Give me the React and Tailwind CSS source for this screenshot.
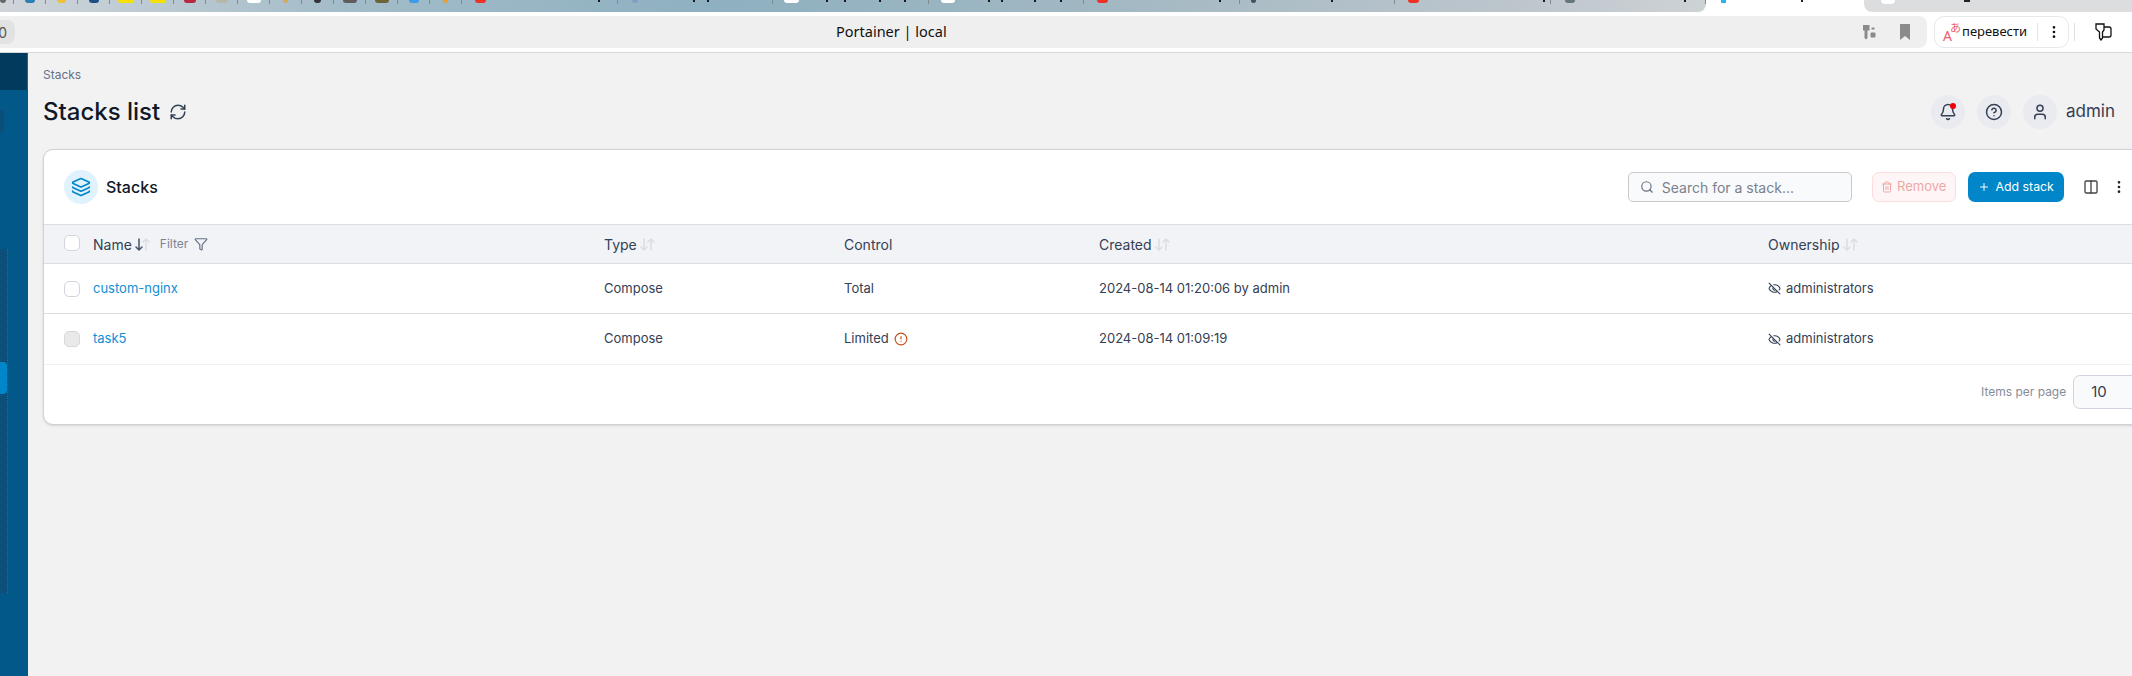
import { Bell, CircleAlert, CircleHelp, Columns2, EllipsisVertical, EyeOff, Funnel, Layers, Plus, RefreshCw, Search, Trash2, User } from "lucide-react";

const pinned = [
  { w: 14, color: "bg-[#666666]", iw: 6, align: "justify-start" },
  { w: 32, color: "bg-[#2a80b0]", iw: 10 },
  { w: 32, color: "bg-[#eec33c]", iw: 9 },
  { w: 32, color: "bg-[#1f4e87]", iw: 10 },
  { w: 32, color: "bg-[#f7e100]", iw: 16 },
  { w: 32, color: "bg-[#f7e100]", iw: 16 },
  { w: 32, color: "bg-[#b8283f]", iw: 12 },
  { w: 32, color: "bg-[#b5b8a8]", iw: 12 },
  { w: 32, color: "bg-white", iw: 14 },
  { w: 32, color: "bg-[#d3ab5b]", iw: 5 },
  { w: 32, color: "bg-[#333333]", iw: 7 },
  { w: 32, color: "bg-[#5c5c5c]", iw: 14 },
  { w: 32, color: "bg-[#6b6436]", iw: 14 },
  { w: 32, color: "bg-[#3d9be9]", iw: 10 },
  { w: 32, color: "bg-[#e8a030]", iw: 5 },
];

const wide = [
  { w: 156, color: "bg-[#ee3124]", iw: 11, ml: 13, specks: [136] },
  { w: 155, color: "bg-[#7f9fc4]", iw: 6, ml: 14, specks: [75, 89] },
  { w: 156, color: "bg-white", iw: 15, ml: 11, specks: [53, 71, 106, 131] },
  { w: 155, color: "bg-white", iw: 14, ml: 12, specks: [59, 72, 105, 131] },
  { w: 156, color: "bg-[#ee3124]", iw: 11, ml: 13, specks: [135] },
  { w: 155, color: "bg-[#42525c]", iw: 5, ml: 11, specks: [91] },
  { w: 156, color: "bg-[#ee3124]", iw: 11, ml: 13, specks: [148] },
  { w: 155, color: "bg-[#66757d]", iw: 10, ml: 14, specks: [133] },
];

function SortArrows({ active }) {
  return (
    <span className="ml-[3px] flex items-center">
      <svg className={active ? "h-[13px] w-2 text-[#475467]" : "h-[13px] w-2 text-[#d9dde4]"} viewBox="0 0 8 13" fill="none" stroke="currentColor" strokeWidth="1.5" strokeLinecap="round" strokeLinejoin="round">
        <path d="M4 1v11M1 9l3 3 3-3" />
      </svg>
      <svg className="-ml-[1px] h-[13px] w-2 text-[#d9dde4]" viewBox="0 0 8 13" fill="none" stroke="currentColor" strokeWidth="1.5" strokeLinecap="round" strokeLinejoin="round">
        <path d="M4 12V1M1 4l3-3 3 3" />
      </svg>
    </span>
  );
}

function Checkbox({ disabled }) {
  return (
    <span className={disabled ? "block h-4 w-4 rounded-[5px] border border-[#d8d8d8] bg-[#e9e9e9]" : "block h-4 w-4 rounded-[5px] border border-[#d0d5dd] bg-white"} />
  );
}

function HeaderCircle({ children }) {
  return (
    <span className="relative flex h-[34px] w-[34px] items-center justify-center rounded-full bg-[#e9ebf0] text-[#344054]">
      {children}
    </span>
  );
}

function Row({ name, control, warn, created, last, disabled }) {
  return (
    <tr className={last ? "h-[51px] border-b border-[#f0f0f0]" : "h-[50px] border-b border-[#dcdde1]"}>
      <td className="pl-5"><Checkbox disabled={disabled} /></td>
      <td className="text-[#0f8fd6]">{name}</td>
      <td>Compose</td>
      <td>
        <span className="flex items-center gap-[5px]">
          {control}
          {warn && <CircleAlert className="h-[14px] w-[14px] text-[#c4501b]" />}
        </span>
      </td>
      <td>{created}</td>
      <td>
        <span className="flex items-center gap-[5px]">
          <EyeOff className="h-[13px] w-[13px]" />
          administrators
        </span>
      </td>
    </tr>
  );
}

export default function App() {
  return (
    <div className="flex h-[676px] w-[2132px] flex-col overflow-hidden bg-white font-['Inter',sans-serif]">
      {/* browser tabs */}
      <div className="flex h-3 shrink-0">
        <div className="flex w-[1706px] overflow-hidden rounded-br-[8px] bg-[linear-gradient(90deg,#d0d5da_0%,#a3bcc9_20%,#8eb0c0_42%,#a2b8c3_65%,#bcc5cc_88%,#cdd2d5_100%)]">
          {pinned.map((t, i) => (
            <div key={i} className={`flex h-[4px] shrink-0 border-r border-[#7d8c94] ${t.align || "justify-center"}`} style={{ width: t.w }}>
              <span className={`h-[3px] rounded-b-sm ${t.color}`} style={{ width: t.iw }} />
            </div>
          ))}
          {wide.map((t, i) => (
            <div key={i} className="relative flex h-[4px] shrink-0 border-r border-[#7d8c94]" style={{ width: t.w }}>
              <span className={`h-[3px] rounded-b-sm ${t.color}`} style={{ width: t.iw, marginLeft: t.ml }} />
              {t.specks.map((x) => (
                <span key={x} className="absolute top-0 h-[2px] w-[2px] bg-[#1a1a1a]" style={{ left: x }} />
              ))}
            </div>
          ))}
        </div>
        <div className="relative w-[158px]">
          <span className="absolute left-[15px] top-0 h-[3px] w-[5px] bg-[#27b4f0]" />
          <span className="absolute left-[95px] top-0 h-[2px] w-[2px] bg-[#222222]" />
        </div>
        <div className="relative flex-1 rounded-bl-[8px] bg-[#dcdddf]">
          <span className="absolute left-[17px] top-0 h-[4px] w-[14px] rounded-b-full bg-white" />
          <span className="absolute left-[100px] top-0 h-[2px] w-[6px] bg-[#222222]" />
        </div>
      </div>

      {/* browser toolbar */}
      <div className="mt-1 flex h-8 shrink-0 items-center">
        <div className="flex h-8 w-[1927px] items-center rounded-r-[8px] bg-[#efefef]">
          <div className="flex h-6 w-[15px] items-center justify-end overflow-hidden rounded-r-[8px] bg-[#e2e2e2] pr-[8px] text-[14px] text-[#555555]">0</div>
          <span className="ml-[821px] font-['Noto_Sans',sans-serif] text-[14.5px] text-[#111111]">Portainer | local</span>
          <svg className="ml-auto h-4 w-4 text-[#8a8a8a]" viewBox="0 0 16 16" fill="currentColor">
            <path d="M2 1h6.500v5.500H6.500V14L5 15.500 3.500 14V6.500H2z" />
            <rect x="9.500" y="8.500" width="5" height="5" rx="1" />
            <rect x="10.500" y="3.500" width="3" height="2" />
          </svg>
          <svg className="ml-[22px] mr-4 h-[18px] w-3 text-[#8a8a8a]" viewBox="0 0 12 18" fill="currentColor">
            <path d="M1 1h10v16l-5-4-5 4z" />
          </svg>
        </div>
        <div className="ml-[7px] flex h-8 w-[135px] items-center rounded-[10px] border border-[#e8e8e8] font-['Noto_Sans','Noto_Sans_CJK_JP',sans-serif] text-[#111111]">
          <span className="relative ml-[8px] h-5 w-4 text-[#f0606f]">
            <span className="absolute bottom-[-1px] left-0 text-[14px] leading-none">A</span>
            <span className="absolute right-[-2px] top-[0px] text-[11px] leading-none">あ</span>
          </span>
          <span className="ml-[3px] text-[13px]">перевести</span>
          <span className="ml-[10px] h-[18px] w-px bg-[#e4e4e4]" />
          <EllipsisVertical className="ml-[8px] h-4 w-4" />
        </div>
        <span className="ml-[5px] h-[18px] w-px bg-[#e0e0e0]" />
        <svg className="ml-5 h-[18px] w-[18px] text-[#111111]" viewBox="0 0 18 18" fill="none" stroke="currentColor" strokeWidth="1.3">
          <path d="M1 1h8v6L7.500 9v6L6 17l-1.500-2V9L1 6z" />
          <path d="M9 4h5a2 2 0 0 1 2 2v6a2 2 0 0 1-2 2H8" />
        </svg>
      </div>

      <div className="mt-1 h-px shrink-0 bg-[#d8d8d8]" />

      <div className="flex min-h-0 flex-1">
        {/* sidebar */}
        <aside className="w-[28px] shrink-0 bg-[#03588a]">
          <div className="h-[37px] border-r border-[#0a6ca5] bg-[#003a5c]" />
          <div className="mt-[20px] h-[23px] w-1 rounded-r-sm bg-[#0a4f79]" />
          <div className="mt-[116px] h-[344px] w-[8px] border-r border-dotted border-[#1d6f9f] bg-[#0c4f78] pt-[113px]">
            <div className="h-8 rounded-r-[4px] bg-[#0086c9]" />
          </div>
        </aside>

        {/* page */}
        <main className="min-w-0 flex-1 overflow-hidden bg-[#f2f2f2] pl-[15px] text-[#344054]">
          <div className="pt-[14px] text-[12px] leading-4 text-[#667085]">Stacks</div>
          <div className="mt-[12px] flex h-[34px] items-center">
            <h1 className="text-[24px] font-medium text-[#101828]">Stacks list</h1>
            <RefreshCw className="ml-[9px] h-[18px] w-[18px] text-[#344054]" />
            <div className="ml-auto flex items-center gap-[12px] pr-[17px]">
              <HeaderCircle>
                <Bell className="h-[18px] w-[18px]" />
                <span className="absolute right-[9px] top-[8px] h-[6px] w-[6px] rounded-full bg-[#ee0000]" />
              </HeaderCircle>
              <HeaderCircle><CircleHelp className="h-[18px] w-[18px]" /></HeaderCircle>
              <div className="flex items-center gap-[9px]">
                <HeaderCircle><User className="h-[18px] w-[18px]" /></HeaderCircle>
                <span className="text-[17px] text-[#344054]">admin</span>
              </div>
            </div>
          </div>

          <section className="mt-[20px] w-[2160px] rounded-[10px] border border-[#d0d1d6] bg-white shadow-sm">
            <div className="flex h-[74px] items-center pl-5">
              <span className="flex h-[34px] w-[34px] items-center justify-center rounded-full bg-[#e0f2fe] text-[#0086c9]">
                <Layers className="h-5 w-5" />
              </span>
              <h2 className="ml-2 text-[16px] font-medium text-[#101828]">Stacks</h2>
              <div className="ml-[1470px] flex h-[30px] w-[224px] items-center rounded-[5px] border border-[#c8cacd] bg-[#f9fafb] pl-[11px] text-[14px] text-[#7b818c]">
                <Search className="h-[14px] w-[14px] text-[#667085]" />
                <span className="ml-[8px]">Search for a stack...</span>
              </div>
              <button className="ml-5 flex h-[30px] w-[84px] items-center justify-center gap-[4px] rounded-[7px] border border-[#fcdcdc] bg-[#fef6f6] text-[13px] text-[#eba9a5]">
                <Trash2 className="h-3 w-3" />
                Remove
              </button>
              <button className="ml-3 flex h-[30px] w-[96px] items-center justify-center gap-[6px] rounded-[7px] bg-[#0086c9] text-[12.300px] text-white">
                <Plus className="h-3 w-3" />
                Add stack
              </button>
              <Columns2 className="ml-[19px] h-4 w-4 text-[#444444]" />
              <EllipsisVertical className="ml-[12px] h-4 w-4 text-[#222222]" />
            </div>

            <table className="w-full table-fixed border-collapse text-left text-[13px]">
              <colgroup>
                <col className="w-[49px]" />
                <col className="w-[511px]" />
                <col className="w-[240px]" />
                <col className="w-[255px]" />
                <col className="w-[669px]" />
                <col />
              </colgroup>
              <thead>
                <tr className="h-[39px] border-y border-[#dcdde1] bg-[#f1f3f7] text-[14px] text-[#344054]">
                  <th className="pb-[3px] pl-5 font-normal"><Checkbox /></th>
                  <th className="font-normal">
                    <span className="flex items-center">
                      Name
                      <SortArrows active />
                      <span className="ml-[10px] text-[12px] text-[#7c8494]">Filter</span>
                      <Funnel className="ml-[6px] h-[14px] w-[14px] text-[#667085]" />
                    </span>
                  </th>
                  <th className="font-normal"><span className="flex items-center">Type<SortArrows /></span></th>
                  <th className="font-normal">Control</th>
                  <th className="font-normal"><span className="flex items-center">Created<SortArrows /></span></th>
                  <th className="font-normal"><span className="flex items-center">Ownership<SortArrows /></span></th>
                </tr>
              </thead>
              <tbody>
                <Row name="custom-nginx" control="Total" created="2024-08-14 01:20:06 by admin" />
                <Row name="task5" control="Limited" warn created="2024-08-14 01:09:19" last disabled />
              </tbody>
            </table>

            <div className="flex h-[59px] items-start pl-[1937px] pt-[10px] text-[12px] text-[#858c99]">
              <span className="flex h-[34px] items-center">Items per page</span>
              <span className="ml-[7px] flex h-[34px] w-[120px] items-center rounded-[7px] border border-[#d0d5dd] bg-[#f9fafb] pl-[17px] text-[15px] text-[#344054]">
                10
                <span className="ml-[26px] h-[2px] w-[2px] bg-[#667085]" />
              </span>
            </div>
          </section>
        </main>
      </div>
    </div>
  );
}
